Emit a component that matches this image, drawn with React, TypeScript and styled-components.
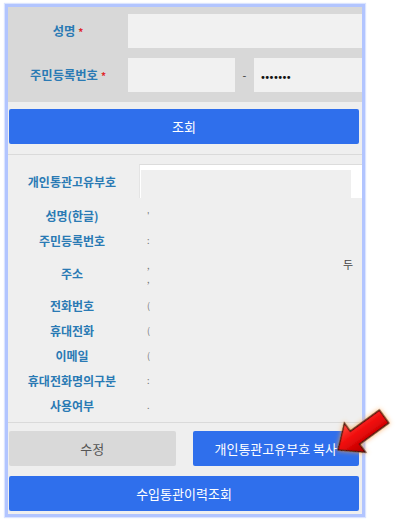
import React from 'react';
import styled, { createGlobalStyle } from 'styled-components';

const GlobalStyle = createGlobalStyle`
  html, body {
    margin: 0;
    padding: 0;
    background: #ffffff;
  }
  body {
    font-family: "Noto Sans CJK KR", "Noto Sans", sans-serif;
  }
`;

const Page = styled.div`
  position: relative;
  width: 396px;
  height: 521px;
  padding: 4px 0 0 5px;
  box-sizing: border-box;
`;

const Panel = styled.div`
  width: 354px;
  border: 3px solid #b2c5ff;
  box-shadow: 0 0 1px 1px #dbe4ff;
  background: #efefef;
  overflow: hidden;
`;

const SearchForm = styled.div`
  background: #d8d8d8;
  padding: 7px 0 10px;
  display: flex;
  flex-direction: column;
  gap: 10px;
`;

const FormRow = styled.div`
  display: grid;
  grid-template-columns: 120px 1fr;
  align-items: center;
  height: 34px;
`;

const Label = styled.div<{ $size?: number }>`
  text-align: center;
  font-size: ${p => p.$size ?? 12}px;
  font-weight: 700;
  color: #2a7ab4;
  white-space: nowrap;
`;

const Req = styled.span`
  color: #e0262b;
  font-size: 10px;
  margin-left: 3px;
`;

const InputBox = styled.div<{ $w?: number }>`
  height: 34px;
  background: #f1f1f1;
  width: ${p => (p.$w ? `${p.$w}px` : 'auto')};
  flex: ${p => (p.$w ? '0 0 auto' : '1')};
  display: flex;
  align-items: center;
  padding-left: 6px;
  box-sizing: border-box;
`;

const SplitInputs = styled.div`
  display: flex;
  align-items: center;
  margin-right: -10px;
`;

const Dash = styled.span`
  width: 19px;
  text-align: center;
  font-size: 11px;
  color: #333;
`;

const Dots = styled.span`
  font-family: "DejaVu Sans", sans-serif;
  font-size: 10px;
  letter-spacing: -1.6px;
  color: #111;
  margin-top: 4px;
`;

const ButtonArea = styled.div`
  padding: 7px 3px 10px 1px;
  border-bottom: 1px solid #dadada;
`;

const Button = styled.button<{ $variant?: 'primary' | 'gray' }>`
  display: flex;
  align-items: center;
  justify-content: center;
  width: 100%;
  height: 35px;
  border: none;
  border-radius: 2px;
  font-family: "Noto Sans CJK KR", "Noto Sans", sans-serif;
  font-size: 13px;
  background: ${p => (p.$variant === 'gray' ? '#d9d9d9' : '#2f6fec')};
  color: ${p => (p.$variant === 'gray' ? '#555555' : '#ffffff')};
  padding: 0;
`;

const InfoTable = styled.div`
  padding: 9px 0 4px;
  border-bottom: 1px solid #dadada;
`;

const InfoRow = styled.div<{ $h: number }>`
  display: grid;
  grid-template-columns: 128px 1fr;
  align-items: center;
  height: ${p => p.$h}px;
`;

const KeyField = styled.div`
  height: 34px;
  margin-left: 3px;
  margin-right: -4px;
  background: #ffffff;
  border-top: 1px solid #dcdcdc;
  border-left: 1px solid #e4e4e4;
  padding: 5px 15px 0 1px;
  box-sizing: border-box;
  display: flex;
`;

const Masked = styled.div`
  flex: 1;
  background: #efefef;
`;

const Value = styled.div<{ $inset?: number }>`
  padding-left: ${p => p.$inset ?? 11}px;
  font-size: 9px;
  color: #777;
  line-height: 14px;
  display: flex;
  flex-direction: column;
`;

const AddressValue = styled.div`
  display: flex;
  justify-content: space-between;
  align-items: flex-start;
  padding-left: 11px;
  padding-right: 9px;
`;

const Tail = styled.span`
  font-size: 11px;
  line-height: 14px;
  color: #444;
  margin-top: -2px;
`;

const Spacer = styled.div`
  height: 5px;
`;

const Actions = styled.div`
  padding: 8px 3px 3px 1px;
  display: flex;
  flex-direction: column;
  gap: 10px;
`;

const ActionPair = styled.div`
  display: grid;
  grid-template-columns: 1fr 1fr;
  gap: 17px;
`;

const ArrowMark = styled.svg`
  position: absolute;
  left: 322px;
  top: 392px;
  width: 74px;
  height: 80px;
  pointer-events: none;
`;

const infoRows: { label: string; value: string; h: number }[] = [
  { label: '성명(한글)', value: "'", h: 25 },
  { label: '주민등록번호', value: ':', h: 25 },
  { label: '주소', value: '', h: 40 },
  { label: '전화번호', value: '(', h: 25 },
  { label: '휴대전화', value: '(', h: 25 },
  { label: '이메일', value: '(', h: 25 },
  { label: '휴대전화명의구분', value: ':', h: 25 },
  { label: '사용여부', value: '.', h: 25 },
];

function RedArrow() {
  return (
    <ArrowMark viewBox="0 0 74 80">
      <defs>
        <linearGradient id="arrowFill" x1="0" y1="0" x2="0" y2="1">
          <stop offset="0" stopColor="#ff5040" />
          <stop offset="0.45" stopColor="#f00a0a" />
          <stop offset="1" stopColor="#b00000" />
        </linearGradient>
        <filter id="glow" x="-30%" y="-40%" width="160%" height="180%">
          <feGaussianBlur in="SourceAlpha" stdDeviation="2.4" result="b" />
          <feFlood floodColor="#ff9a3c" floodOpacity="0.8" />
          <feComposite in2="b" operator="in" result="g" />
          <feMerge>
            <feMergeNode in="g" />
            <feMergeNode in="SourceGraphic" />
          </feMerge>
        </filter>
      </defs>
      <g transform="translate(16,58) rotate(-36)" filter="url(#glow)">
        <polygon
          points="0,0 21,-18 21,-8 57,-8 57,8 21,8 21,18"
          fill="url(#arrowFill)"
          stroke="#3a0a0a"
          strokeWidth="1.3"
          strokeLinejoin="miter"
        />
      </g>
    </ArrowMark>
  );
}

export default function App() {
  return (
    <Page>
      <GlobalStyle />
      <Panel>
        <SearchForm>
          <FormRow>
            <Label $size={12.3}>
              성명<Req>*</Req>
            </Label>
            <SplitInputs>
              <InputBox />
            </SplitInputs>
          </FormRow>
          <FormRow>
            <Label $size={12.3}>
              주민등록번호<Req>*</Req>
            </Label>
            <SplitInputs>
              <InputBox $w={107} />
              <Dash>-</Dash>
              <InputBox>
                <Dots>•••••••</Dots>
              </InputBox>
            </SplitInputs>
          </FormRow>
        </SearchForm>

        <ButtonArea>
          <Button>조회</Button>
        </ButtonArea>

        <InfoTable>
          <InfoRow $h={34}>
            <Label>개인통관고유부호</Label>
            <KeyField>
              <Masked />
            </KeyField>
          </InfoRow>
          <Spacer />
          {infoRows.map(row => (
            <InfoRow key={row.label} $h={row.h}>
              <Label>{row.label}</Label>
              {row.label === '주소' ? (
                <AddressValue>
                  <Value $inset={0}>
                    <span>,</span>
                    <span>,</span>
                  </Value>
                  <Tail>두</Tail>
                </AddressValue>
              ) : (
                <Value>{row.value}</Value>
              )}
            </InfoRow>
          ))}
        </InfoTable>

        <Actions>
          <ActionPair>
            <Button $variant="gray">수정</Button>
            <Button>개인통관고유부호 복사</Button>
          </ActionPair>
          <Button>수입통관이력조회</Button>
        </Actions>
      </Panel>
      <RedArrow />
    </Page>
  );
}
